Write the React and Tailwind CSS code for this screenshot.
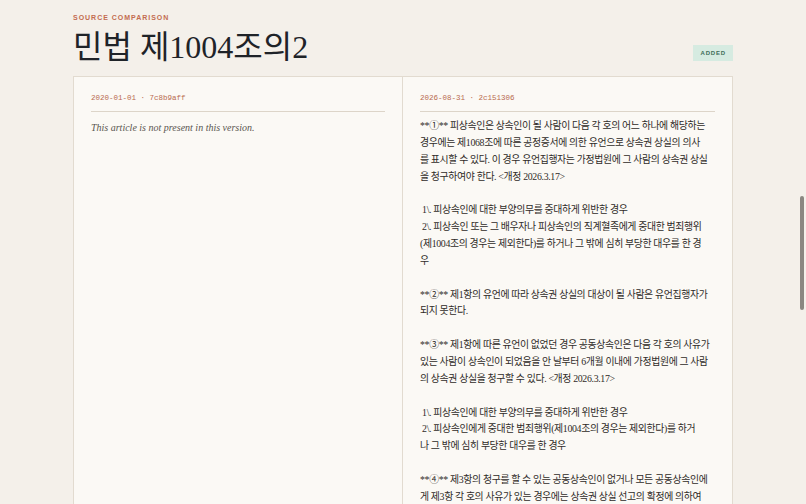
import React from 'react';

const serif = { fontFamily: '"Liberation Serif", "Noto Sans CJK KR", serif' };
const mono = { fontFamily: '"Liberation Mono", "DejaVu Sans Mono", monospace' };
const sans = { fontFamily: '"Liberation Sans", Arial, sans-serif' };

// lines are kept as shown in the source view (pre-wrap text)
const newText = [
  '**①** 피상속인은 상속인이 될 사람이 다음 각 호의 어느 하나에 해당하는',
  '경우에는 제1068조에 따른 공정증서에 의한 유언으로 상속권 상실의 의사',
  '를 표시할 수 있다. 이 경우 유언집행자는 가정법원에 그 사람의 상속권 상실',
  '을 청구하여야 한다. <개정 2026.3.17>',
  '',
  ' 1\\. 피상속인에 대한 부양의무를 중대하게 위반한 경우',
  ' 2\\. 피상속인 또는 그 배우자나 피상속인의 직계혈족에게 중대한 범죄행위',
  '(제1004조의 경우는 제외한다)를 하거나 그 밖에 심히 부당한 대우를 한 경',
  '우',
  '',
  '**②** 제1항의 유언에 따라 상속권 상실의 대상이 될 사람은 유언집행자가',
  '되지 못한다.',
  '',
  '**③** 제1항에 따른 유언이 없었던 경우 공동상속인은 다음 각 호의 사유가',
  '있는 사람이 상속인이 되었음을 안 날부터 6개월 이내에 가정법원에 그 사람',
  '의 상속권 상실을 청구할 수 있다. <개정 2026.3.17>',
  '',
  ' 1\\. 피상속인에 대한 부양의무를 중대하게 위반한 경우',
  ' 2\\. 피상속인에게 중대한 범죄행위(제1004조의 경우는 제외한다)를 하거',
  '나 그 밖에 심히 부당한 대우를 한 경우',
  '',
  '**④** 제3항의 청구를 할 수 있는 공동상속인이 없거나 모든 공동상속인에',
  '게 제3항 각 호의 사유가 있는 경우에는 상속권 상실 선고의 확정에 의하여',
  '상속인이 될 사람이 이를 청구할 수 있다.',
].join('\n');

const VersionHeader = ({ date, hash }) => (
  <div className="pb-[7px] border-b border-[#ddd5c9] text-[7.5px] text-[#b86a4f] leading-[12px]" style={mono}>
    {date} · {hash}
  </div>
);

const App = () => {
  return (
    <div className="relative h-screen overflow-hidden bg-[#f4f0ea]">
      <div className="px-[73px] pt-[13px]">
        <div className="text-[7px] font-bold tracking-[0.14em] text-[#c36c50] leading-[10px]" style={sans}>
          SOURCE COMPARISON
        </div>
        <div className="flex items-end justify-between mt-[4px] mb-[9px]">
          <h1 className="text-[32px] leading-[40px] text-[#1f2328]" style={serif}>
            민법 제1004조의2
          </h1>
          <span
            className="mb-[6px] px-[7px] py-[4px] bg-[#d6ebe1] text-[#3f6d59] text-[6px] font-bold tracking-[0.14em] leading-[8px]"
            style={sans}
          >
            ADDED
          </span>
        </div>

        <div className="grid grid-cols-2 border border-[#e2dbd0] bg-[#fbf9f5] min-h-[600px]">
          <div className="px-[17px] pt-[15px] border-r border-[#e2dbd0]">
            <VersionHeader date="2020-01-01" hash="7c8b9aff" />
            <p className="mt-[7px] text-[10px] italic leading-[17px] text-[#5a5550]" style={serif}>
              This article is not present in this version.
            </p>
          </div>
          <div className="px-[17px] pt-[15px]">
            <VersionHeader date="2026-08-31" hash="2c151306" />
            <div
              className="mt-[6px] whitespace-pre text-[9.9px] tracking-[-0.35px] leading-[16.86px] text-[#2f2b28]"
              style={serif}
            >
              {newText}
            </div>
          </div>
        </div>
      </div>

      {/* overlay scrollbar thumb */}
      <div className="absolute right-[2px] top-[196px] w-[4px] h-[114px] rounded-full bg-[#8b8781]" />
    </div>
  );
};

export default App;
